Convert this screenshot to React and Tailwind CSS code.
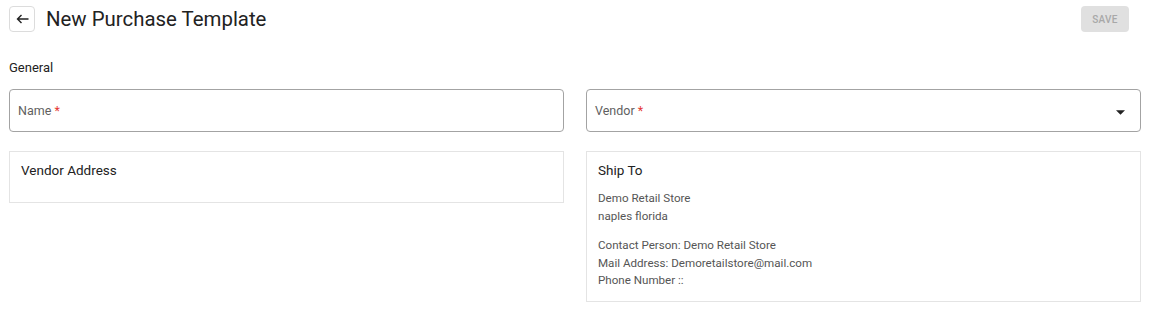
import React from 'react';

const Field = ({ label, select }) => (
    <div className="relative h-[43px] rounded-[4px] border border-[#a3a3a3] bg-white flex items-center pl-[8px] pr-[15px]">
        <span className="mt-[1px] text-[12.5px] text-[#5f5f5f]">
            {label} <span className="text-[#e53935]">*</span>
        </span>
        {select && (
            <svg className="ml-auto mt-[3px]" width="9" height="5" viewBox="0 0 10 5">
                <path d="M0 0h10L5 5z" fill="#222" />
            </svg>
        )}
    </div>
);

const App = () => {
    return (
        <div className="w-[1156px] h-[309px] bg-white pl-[9px] pr-[15px] font-['Roboto',sans-serif] text-[#212121]">
            <div className="flex items-center h-[38px] pt-[6px] pb-[6px]">
                <button className="w-[26px] h-[26px] rounded-[4px] border border-[#dcdcdc] flex items-center justify-center">
                    <svg width="13" height="10" viewBox="0 0 13 10" fill="none" stroke="#222" strokeWidth="1.4">
                        <path d="M12.5 5H1.5M5.5 1L1.5 5l4 4" />
                    </svg>
                </button>
                <h1 className="ml-[11px] text-[20.4px] leading-[26px] text-[#222]">New Purchase Template</h1>
                <button className="ml-auto mr-[12px] w-[48px] h-[26px] rounded-[4px] bg-[#e0e0e0] text-[10px] font-medium text-[#a8a8a8] tracking-[0.3px]">
                    SAVE
                </button>
            </div>
            <div className="pt-[21px] text-[13px] leading-[18px] text-[#222]">General</div>
            <div className="grid grid-cols-2 gap-x-[22px] gap-y-[19px] mt-[12px]">
                <Field label="Name" />
                <Field label="Vendor" select />
                <div className="self-start h-[52px] border border-[#e4e4e4] px-[11px] pt-[9px]">
                    <div className="text-[13.5px] leading-[18px] text-[#222]">Vendor Address</div>
                </div>
                <div className="h-[151px] border border-[#e4e4e4] px-[11px] pt-[9px]">
                    <div className="text-[13.5px] leading-[18px] text-[#222]">Ship To</div>
                    <div className="mt-[11px] text-[11.6px] leading-[17.5px] text-[#555]">
                        <div>Demo Retail Store</div>
                        <div>naples florida</div>
                    </div>
                    <div className="mt-[12px] text-[11.6px] leading-[17.5px] text-[#555]">
                        <div>Contact Person: Demo Retail Store</div>
                        <div>Mail Address: Demoretailstore@mail.com</div>
                        <div>Phone Number ::</div>
                    </div>
                </div>
            </div>
        </div>
    );
};

export default App;
